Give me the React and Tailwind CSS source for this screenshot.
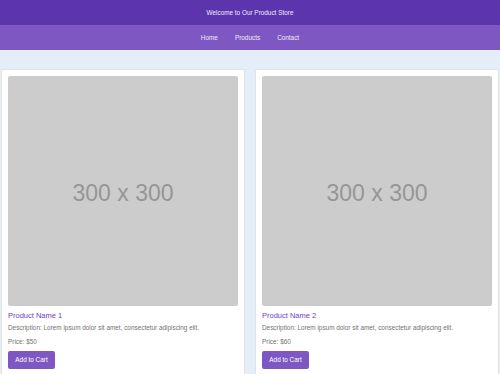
import React from "react";

const font = { fontFamily: '"Liberation Sans", Arial, sans-serif' };

function Card({ name, price }) {
  return (
    <div className="bg-white border border-[#e3e3e3] rounded-[2px] px-[6px] pt-[6px] pb-[6px]">
      <div className="w-full h-[230px] bg-[#cccccc] rounded-[2px] flex items-center justify-center">
        <span className="text-[23px] leading-none text-[#969696] mt-[4px]">300 x 300</span>
      </div>
      <div className="mt-[5.5px] text-[7.5px] leading-[8.4px] text-[#6f42c1]">{name}</div>
      <div className="mt-[4.3px] text-[6.4px] leading-[7.2px] text-[#737373]">
        Description: Lorem ipsum dolor sit amet, consectetur adipiscing elit.
      </div>
      <div className="mt-[6.5px] text-[6.4px] leading-[7.2px] text-[#737373]">Price: {price}</div>
      <div className="mt-[6px] flex">
        <div className="h-[18px] w-[47px] rounded-[2px] bg-[#7e57c2] text-white text-[6.4px] flex items-center justify-center">
          Add to Cart
        </div>
      </div>
    </div>
  );
}

export default function App() {
  return (
    <div style={font} className="w-[500px] h-[374px] overflow-hidden bg-[#e4eef9]">
      <div className="h-[25px] bg-[#5b34ae] flex items-center justify-center text-[6.4px] text-[#f0ebf8]">
        Welcome to Our Product Store
      </div>
      <div className="h-[25px] bg-[#7e57c2] flex items-center justify-center gap-[17px] text-[6.4px] text-[#f0ebf8]">
        <span>Home</span>
        <span>Products</span>
        <span>Contact</span>
      </div>
      <div className="grid grid-cols-2 gap-[10px] px-[1px] pt-[19px]">
        <Card name="Product Name 1" price="$50" />
        <Card name="Product Name 2" price="$60" />
      </div>
    </div>
  );
}
